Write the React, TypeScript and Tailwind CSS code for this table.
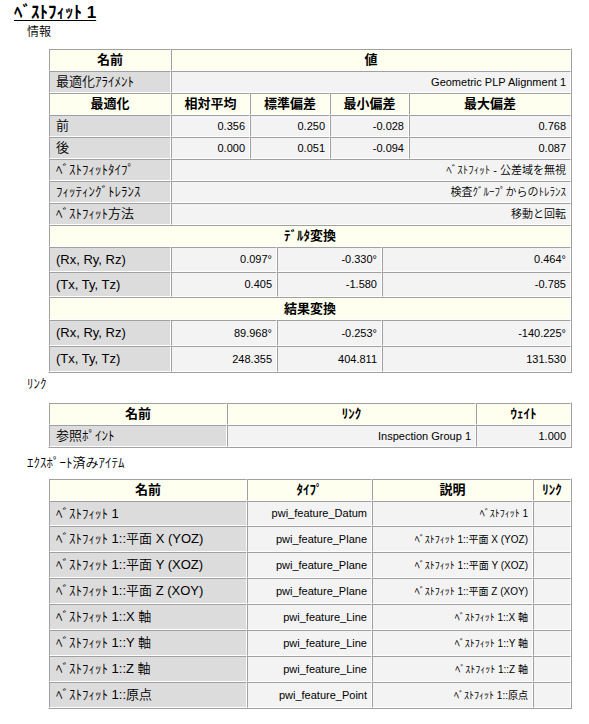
import React from 'react';

type Kind = 'head' | 'label' | 'val' | 'desc';

const KIND: Record<Kind, string> = {
  head: 'bg-[#fffff0] font-bold text-[13px] justify-center',
  label: 'bg-[#dcdcdc] text-[13px] font-[350] justify-start pl-[6px]',
  val: 'bg-[#f3f3f3] text-[11px] justify-end pr-[4px]',
  desc: 'bg-[#f3f3f3] text-[10px] justify-end pr-[4px]',
};

const Cell = ({ w, kind, children, className = '' }: { w: string; kind: Kind; children?: React.ReactNode; className?: string }) => (
  <div
    className={`flex h-full shrink-0 items-center overflow-hidden whitespace-nowrap border border-t-[#a0a0a0] border-l-[#a0a0a0] border-b-white border-r-white ${w} ${KIND[kind]} ${className}`}
  >
    {children}
  </div>
);

const Table = ({ children }: { children: React.ReactNode }) => (
  <div className="ml-[48px] w-[524px] border border-t-white border-l-white border-b-[#a0a0a0] border-r-[#a0a0a0]">
    {children}
  </div>
);

const deviations = [
  { name: '前', vals: ['0.356', '0.250', '-0.028', '0.768'] },
  { name: '後', vals: ['0.000', '0.051', '-0.094', '0.087'] },
];

const fitInfo = [
  { name: 'ﾍﾞｽﾄﾌｨｯﾄﾀｲﾌﾟ', value: 'ﾍﾞｽﾄﾌｨｯﾄ - 公差域を無視' },
  { name: 'ﾌｨｯﾃｨﾝｸﾞﾄﾚﾗﾝｽ', value: '検査ｸﾞﾙｰﾌﾟからのﾄﾚﾗﾝｽ' },
  { name: 'ﾍﾞｽﾄﾌｨｯﾄ方法', value: '移動と回転' },
];

const exported = [
  { name: 'ﾍﾞｽﾄﾌｨｯﾄ 1', type: 'pwi_feature_Datum' },
  { name: 'ﾍﾞｽﾄﾌｨｯﾄ 1::平面 X (YOZ)', type: 'pwi_feature_Plane' },
  { name: 'ﾍﾞｽﾄﾌｨｯﾄ 1::平面 Y (XOZ)', type: 'pwi_feature_Plane' },
  { name: 'ﾍﾞｽﾄﾌｨｯﾄ 1::平面 Z (XOY)', type: 'pwi_feature_Plane' },
  { name: 'ﾍﾞｽﾄﾌｨｯﾄ 1::X 軸', type: 'pwi_feature_Line' },
  { name: 'ﾍﾞｽﾄﾌｨｯﾄ 1::Y 軸', type: 'pwi_feature_Line' },
  { name: 'ﾍﾞｽﾄﾌｨｯﾄ 1::Z 軸', type: 'pwi_feature_Line' },
  { name: 'ﾍﾞｽﾄﾌｨｯﾄ 1::原点', type: 'pwi_feature_Point' },
];

// three-column transform block (delta / result)
const Transform = ({ title, rows, headH }: { title: string; rows: { name: string; vals: string[]; h: string }[]; headH: string }) => (
  <>
    <div className={`flex ${headH}`}>
      <Cell w="w-[522px]" kind="head">{title}</Cell>
    </div>
    {rows.map((r) => (
      <div key={r.name} className={`flex ${r.h}`}>
        <Cell w="w-[122px]" kind="label" className="text-[12px]">{r.name}</Cell>
        <Cell w="w-[106px]" kind="val">{r.vals[0]}</Cell>
        <Cell w="w-[105px]" kind="val">{r.vals[1]}</Cell>
        <Cell w="w-[189px]" kind="val">{r.vals[2]}</Cell>
      </div>
    ))}
  </>
);

export default function App() {
  return (
    <div className="h-[724px] w-[589px] bg-white text-black font-['Liberation_Sans','Noto_Sans_CJK_JP',sans-serif]">
      <div className="pl-[14px] pt-[2px] text-[17px] font-bold leading-[21px] underline underline-offset-[2px]">ﾍﾞｽﾄﾌｨｯﾄ 1</div>
      <div className="h-[25px] pl-[27px] pt-[1px] text-[12px] font-[350] leading-[16px]">情報</div>

      <Table>
        <div className="flex h-[22px]">
          <Cell w="w-[122px]" kind="head">名前</Cell>
          <Cell w="w-[400px]" kind="head">値</Cell>
        </div>
        <div className="flex h-[22px]">
          <Cell w="w-[122px]" kind="label">最適化ｱﾗｲﾒﾝﾄ</Cell>
          <Cell w="w-[400px]" kind="val">Geometric PLP Alignment 1</Cell>
        </div>
        <div className="flex h-[22px]">
          <Cell w="w-[122px]" kind="head">最適化</Cell>
          <Cell w="w-[79px]" kind="head">相対平均</Cell>
          <Cell w="w-[80px]" kind="head">標準偏差</Cell>
          <Cell w="w-[79px]" kind="head">最小偏差</Cell>
          <Cell w="w-[162px]" kind="head">最大偏差</Cell>
        </div>
        {deviations.map((d) => (
          <div key={d.name} className="flex h-[22px]">
            <Cell w="w-[122px]" kind="label">{d.name}</Cell>
            <Cell w="w-[79px]" kind="val">{d.vals[0]}</Cell>
            <Cell w="w-[80px]" kind="val">{d.vals[1]}</Cell>
            <Cell w="w-[79px]" kind="val">{d.vals[2]}</Cell>
            <Cell w="w-[162px]" kind="val">{d.vals[3]}</Cell>
          </div>
        ))}
        {fitInfo.map((f) => (
          <div key={f.name} className="flex h-[22px]">
            <Cell w="w-[122px]" kind="label">{f.name}</Cell>
            <Cell w="w-[400px]" kind="val" className="text-[11.5px] font-[350]">{f.value}</Cell>
          </div>
        ))}
        <Transform
          title="ﾃﾞﾙﾀ変換"
          headH="h-[22px]"
          rows={[
            { name: '(Rx, Ry, Rz)', vals: ['0.097°', '-0.330°', '0.464°'], h: 'h-[25px]' },
            { name: '(Tx, Ty, Tz)', vals: ['0.405', '-1.580', '-0.785'], h: 'h-[25px]' },
          ]}
        />
        <Transform
          title="結果変換"
          headH="h-[23px]"
          rows={[
            { name: '(Rx, Ry, Rz)', vals: ['89.968°', '-0.253°', '-140.225°'], h: 'h-[26px]' },
            { name: '(Tx, Ty, Tz)', vals: ['248.355', '404.811', '131.530'], h: 'h-[26px]' },
          ]}
        />
      </Table>

      <div className="h-[29px] pl-[27px] pt-[3px] text-[13px] font-[350] leading-[16px]">ﾘﾝｸ</div>
      <Table>
        <div className="flex h-[22px]">
          <Cell w="w-[178px]" kind="head">名前</Cell>
          <Cell w="w-[249px]" kind="head">ﾘﾝｸ</Cell>
          <Cell w="w-[95px]" kind="head">ｳｪｲﾄ</Cell>
        </div>
        <div className="flex h-[22px]">
          <Cell w="w-[178px]" kind="label">参照ﾎﾟｲﾝﾄ</Cell>
          <Cell w="w-[249px]" kind="val">Inspection Group 1</Cell>
          <Cell w="w-[95px]" kind="val">1.000</Cell>
        </div>
      </Table>

      <div className="h-[30px] pl-[27px] pt-[7px] text-[13px] font-[350] leading-[16px]">ｴｸｽﾎﾟｰﾄ済みｱｲﾃﾑ</div>
      <Table>
        <div className="flex h-[22px]">
          <Cell w="w-[198px]" kind="head">名前</Cell>
          <Cell w="w-[125px]" kind="head">ﾀｲﾌﾟ</Cell>
          <Cell w="w-[161px]" kind="head">説明</Cell>
          <Cell w="w-[38px]" kind="head">ﾘﾝｸ</Cell>
        </div>
        {exported.map((e, i) => (
          <div key={e.name} className={`flex ${i === 0 ? 'h-[25px]' : 'h-[26px]'}`}>
            <Cell w="w-[198px]" kind="label">{e.name}</Cell>
            <Cell w="w-[125px]" kind="val">{e.type}</Cell>
            <Cell w="w-[161px]" kind="desc">{e.name}</Cell>
            <Cell w="w-[38px]" kind="val"></Cell>
          </div>
        ))}
      </Table>
    </div>
  );
}
